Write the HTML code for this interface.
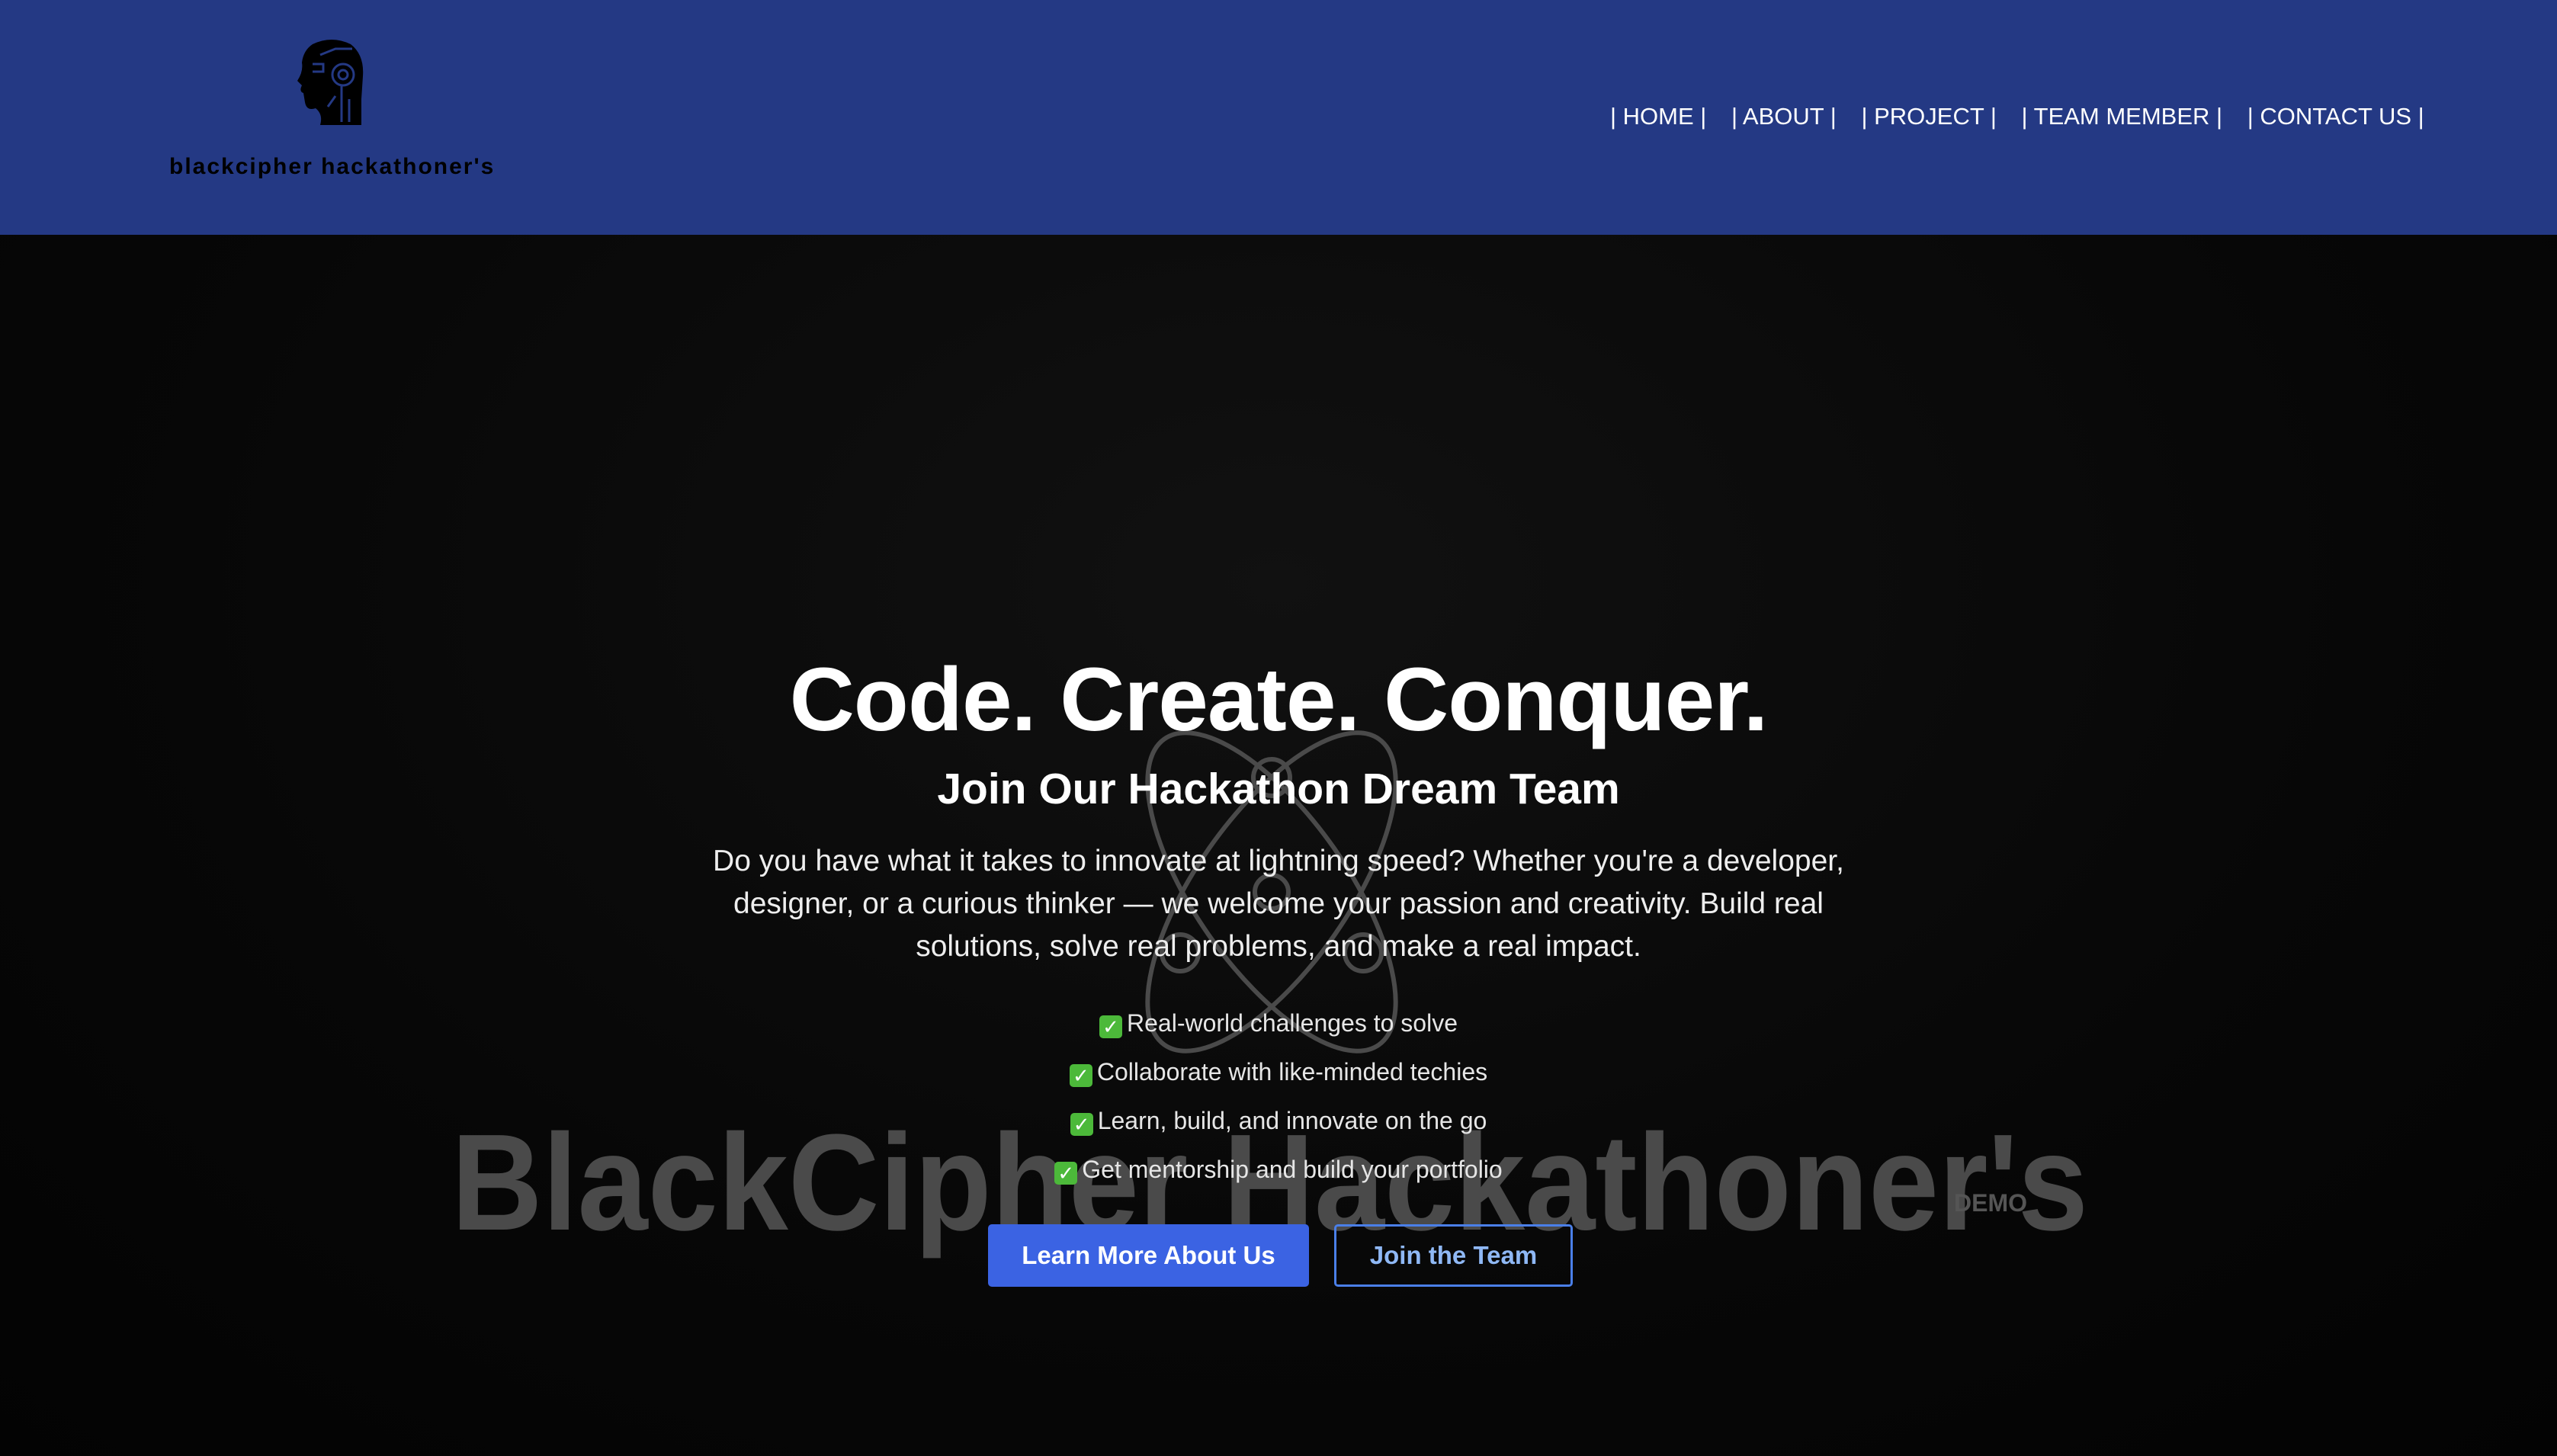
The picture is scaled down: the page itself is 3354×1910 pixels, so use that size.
<!DOCTYPE html>
<html><head><meta charset="utf-8"><style>
*{margin:0;padding:0;box-sizing:border-box}
body{width:3354px;height:1910px;overflow:hidden;background:radial-gradient(ellipse at 50% 40%,#111 0%,#070707 60%,#030303 100%);font-family:"Liberation Sans",sans-serif;color:#fff;position:relative}
header{position:absolute;left:0;top:0;width:3354px;height:308px;background:#243984}
.logo{position:absolute;left:390px;top:50px}
.ltxt{position:absolute;left:222px;top:202px;font-size:30px;font-weight:bold;color:#000;letter-spacing:2px}
nav{position:absolute;top:135px;left:2112px;font-size:31px;white-space:nowrap}
nav span{margin-right:24px}
.c{position:absolute;left:0;width:3354px;text-align:center;white-space:nowrap}
.wm{position:absolute;left:592px;top:1448px;font-size:180px;font-weight:bold;color:#4a4a4a;white-space:nowrap;transform:scaleX(0.92);transform-origin:0 0}
.demo{position:absolute;left:2563px;top:1560px;font-size:32px;font-weight:bold;color:#555}
.btn{position:absolute;top:1606px;height:82px;font-size:33px;font-weight:bold;display:flex;align-items:center;justify-content:center;border-radius:5px}
.ck{display:inline-block;width:30px;height:30px;background:#4cb93a;border-radius:5px;color:#fff;font-size:26px;line-height:30px;vertical-align:-3px;margin-right:6px;text-align:center}
</style></head><body>
<header>
<svg class="logo" width="92" height="116" viewBox="0 0 92 116"><path d="M20 8 Q45 -4 70 8 Q88 22 86 50 L84 80 L84 114 L30 114 Q34 100 24 92 Q12 96 10 84 L8 72 Q2 70 6 62 L0 56 Q8 44 6 32 Q8 16 20 8Z" fill="#000"/><circle cx="60" cy="48" r="14" fill="none" stroke="#243984" stroke-width="3"/><circle cx="60" cy="48" r="6" fill="none" stroke="#243984" stroke-width="3"/><path d="M30 22 L50 14 L72 14 M20 34 L34 34 L34 44 L20 44 M58 62 L58 110 M68 80 L68 110 M40 90 L50 76" stroke="#243984" stroke-width="3" fill="none"/></svg>
<div class="ltxt">blackcipher hackathoner's</div>
<nav><span>| HOME |</span> <span>| ABOUT |</span> <span>| PROJECT |</span> <span>| TEAM MEMBER |</span> <span>| CONTACT US |</span></nav>
</header>
<svg style="position:absolute;left:1418px;top:920px" width="500" height="500" viewBox="0 0 500 500" fill="none" stroke="#4a4a4a" stroke-width="6">
<ellipse cx="250" cy="250" rx="100" ry="245" transform="rotate(35 250 250)"/>
<ellipse cx="250" cy="250" rx="100" ry="245" transform="rotate(-35 250 250)"/>
<circle cx="250" cy="100" r="24"/><circle cx="130" cy="330" r="24"/><circle cx="370" cy="330" r="24"/><circle cx="250" cy="250" r="22"/>
</svg>
<div class="wm">BlackCipher Hackathoner's</div>
<div class="demo">DEMO</div>
<div class="c" style="top:850px;font-size:118px;font-weight:bold;letter-spacing:-1px">Code. Create. Conquer.</div>
<div class="c" style="top:1002px;font-size:57px;font-weight:bold">Join Our Hackathon Dream Team</div>
<div class="c" style="top:1102px;font-size:39px;line-height:56px;color:#eee">Do you have what it takes to innovate at lightning speed? Whether you're a developer,<br>designer, or a curious thinker — we welcome your passion and creativity. Build real<br>solutions, solve real problems, and make a real impact.</div>
<div class="c" style="top:1310px;font-size:32px;line-height:64px;color:#e6e6e6"><span class="ck">✓</span>Real-world challenges to solve<br><span class="ck">✓</span>Collaborate with like-minded techies<br><span class="ck">✓</span>Learn, build, and innovate on the go<br><span class="ck">✓</span>Get mentorship and build your portfolio</div>
<div class="btn" style="left:1296px;width:421px;background:#3b63e3;color:#fff">Learn More About Us</div>
<div class="btn" style="left:1750px;width:313px;border:3px solid #4a7fe8;color:#8fb8f5">Join the Team</div>
</body></html>
